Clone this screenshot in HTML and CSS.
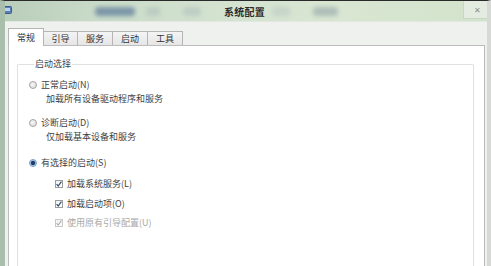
FILE: index.html
```html
<!DOCTYPE html>
<html lang="zh-CN">
<head>
<meta charset="utf-8">
<title>系统配置</title>
<link rel="stylesheet" href="styles.css">
</head>
<body>
<div class="window">
  <div class="titlebar">
    <svg class="app-icon" width="9" height="8" viewBox="0 0 9 8">
      <rect x="0.5" y="0.5" width="8" height="7" rx="1" fill="#5b7fb8" stroke="#3d5b8c"/>
      <rect x="2" y="2" width="5" height="3" fill="#b9d0ee"/>
    </svg>
    <span class="blob b1"></span><span class="blob b2"></span><span class="blob b3"></span><span class="blob b4"></span><span class="blob b5"></span>
    <span class="title">系统配置</span>
    <span class="close">✕</span>
  </div>
  <div class="body">
    <div class="tabs">
      <div class="tab active">常规</div>
      <div class="tab w34">引导</div>
      <div class="tab">服务</div>
      <div class="tab">启动</div>
      <div class="tab">工具</div>
    </div>
    <div class="panel">
      <fieldset class="group">
        <legend>启动选择</legend>
        <div class="opt first"><span class="radio"></span>正常启动(N)</div>
        <div class="desc">加载所有设备驱动程序和服务</div>
        <div class="opt second"><span class="radio"></span>诊断启动(D)</div>
        <div class="desc">仅加载基本设备和服务</div>
        <div class="opt third"><span class="radio checked"></span>有选择的启动(S)</div>
        <div class="cb c1"><span class="box"><svg viewBox="0 0 8 8" width="8" height="8"><path d="M1.6 4.2 L3.2 6 L6.4 1.6" fill="none" stroke="#2f4f6f" stroke-width="1.2"/></svg></span>加载系统服务(L)</div>
        <div class="cb c2"><span class="box"><svg viewBox="0 0 8 8" width="8" height="8"><path d="M1.6 4.2 L3.2 6 L6.4 1.6" fill="none" stroke="#2f4f6f" stroke-width="1.2"/></svg></span>加载启动项(O)</div>
        <div class="cb c3 disabled"><span class="box"><svg viewBox="0 0 8 8" width="8" height="8"><path d="M1.6 4.2 L3.2 6 L6.4 1.6" fill="none" stroke="#b0b0b0" stroke-width="1.1"/></svg></span>使用原有引导配置(U)</div>
      </fieldset>
    </div>
  </div>
</div>
</body>
</html>
```

FILE: styles.css
```css
* { box-sizing: border-box; }
html, body {
  margin: 0;
  padding: 0;
  width: 491px;
  height: 266px;
  overflow: hidden;
  background: #f0f0f0;
  font-family: "Noto Sans CJK SC", "Noto Sans", sans-serif;
  font-size: 9px;
  color: #3f3f3f;
}
.window {
  width: 491px;
  height: 266px;
  display: flex;
  flex-direction: column;
  border-top: 1px solid #2a2a2a;
  border-left: 5px solid #a9bfac;
  border-right: 4px solid #d6d9d6;
  background: #eff1ef;
  overflow: hidden;
}
.titlebar {
  position: relative;
  height: 21px;
  flex: none;
  display: flex;
  align-items: center;
  justify-content: center;
  background: linear-gradient(90deg, #b9cdbb 0%, #c9dbc9 20%, #d4e3d0 45%, #d8e6d2 70%, #d2e3cb 100%);
  border-bottom: 1px solid #e2e8e0;
  margin-left: -5px;
  margin-right: -4px;
  overflow: hidden;
}
.app-icon {
  position: absolute;
  left: 3px;
  top: 5px;
}
.blob {
  position: absolute;
  top: 6px;
  height: 9px;
  border-radius: 4px;
  filter: blur(2px);
}
.b1 { left: 95px; width: 40px; background: #7d97a8; }
.b2 { left: 146px; width: 14px; background: #bcccc3; }
.b3 { left: 183px; width: 18px; background: #bfcdc4; }
.b4 { left: 272px; width: 18px; background: #c6d4c9; }
.b5 { left: 313px; width: 25px; background: #aebfb8; }
.title {
  position: relative;
  font-size: 10px;
  font-weight: bold;
  color: #2c2c2c;
  margin-left: -2px;
  letter-spacing: 0.2px;
}
.close {
  position: absolute;
  right: 0;
  top: 0;
  width: 28px;
  height: 18px;
  display: flex;
  align-items: center;
  justify-content: center;
  font-size: 8px;
  color: #8a918a;
  background: #e4ece1;
  border-left: 1px solid #c9d5c6;
  border-bottom: 1px solid #c9d5c6;
}
.body {
  flex: 1;
  min-height: 0;
  display: flex;
  flex-direction: column;
  padding: 6px 2px 0 3px;
}
.tabs {
  display: flex;
  align-items: flex-end;
  height: 17px;
  flex: none;
  position: relative;
  z-index: 1;
}
.tab {
  width: 35px;
  height: 14px;
  border: 1px solid #b5b5b5;
  border-bottom: none;
  border-left: none;
  background: linear-gradient(#f4f4f4, #e6e6e6);
  display: flex;
  align-items: center;
  justify-content: center;
  color: #333;
  line-height: 1;
}
.tab.w34 { width: 34px; }
.tab.active {
  width: 36px;
  height: 18px;
  margin-bottom: -1px;
  border-left: 1px solid #b5b5b5;
  background: #fff;
}
.panel {
  flex: 1;
  min-height: 0;
  display: flex;
  flex-direction: column;
  background: #fff;
  border: 1px solid #bcbcbc;
  border-bottom: none;
  padding: 12px 10px 0 8px;
}
.group {
  flex: 1;
  min-height: 0;
  margin: 0;
  border: 1px solid #e0e0e0;
  border-bottom: none;
  border-radius: 2px 2px 0 0;
  padding: 0 0 0 11px;
}
.group legend {
  font-size: 9px;
  line-height: 12px;
  padding: 0 1px;
  margin-left: 5px;
  color: #444;
}
.opt, .desc, .cb {
  height: 14px;
  line-height: 14px;
  display: flex;
  align-items: center;
  white-space: nowrap;
}
.opt.first { margin-top: 8px; }
.opt.second { margin-top: 10px; }
.opt.third { margin-top: 12px; }
.desc { padding-left: 17px; }
.cb { padding-left: 26px; margin-top: 6px; }
.cb.c1 { margin-top: 7px; }
.cb.c3 { margin-top: 5px; }
.radio {
  width: 8px;
  height: 8px;
  border-radius: 50%;
  border: 1px solid #a2a2a2;
  background: radial-gradient(circle at 40% 40%, #f6f6f6, #d9d9d9);
  margin-right: 4px;
  flex: none;
}
.radio.checked {
  border-color: #7d9cc4;
  background: radial-gradient(circle, #1f3d68 0 1.8px, #8fb4e0 2.4px, #dce9f7 3.5px);
}
.box {
  width: 8px;
  height: 8px;
  border: 1px solid #9c9c9c;
  background: linear-gradient(#f2f2f2, #ffffff);
  margin-right: 4px;
  flex: none;
  display: flex;
  align-items: center;
  justify-content: center;
}
.box svg { display: block; margin: -1px; }
.disabled { color: #a8a8a8; }
.disabled .box { border-color: #c8c8c8; }
```
